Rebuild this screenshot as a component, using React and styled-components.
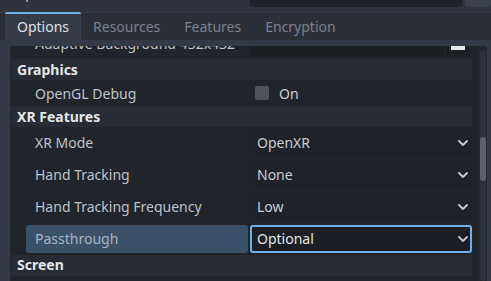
import React from "react";
import styled, { createGlobalStyle } from "styled-components";

const ACCENT = "#6fb0ec";

const GlobalStyle = createGlobalStyle`
	html, body {
		margin: 0;
		padding: 0;
		background: #2e333d;
		overflow: hidden;
	}
	body {
		font-family: "Noto Sans", "Open Sans", sans-serif;
		font-size: 14px;
	}
`;

const Window = styled.div`
	display: flex;
	flex-direction: column;
	width: 491px;
	height: 281px;
	box-sizing: border-box;
`;

const TopStrip = styled.div`
	height: 12px;
	overflow: hidden;
`;

const PathRow = styled.div`
	display: flex;
	align-items: flex-end;
	height: 30px;
	margin-top: -22px;
	padding: 0 0 1px 10px;
	box-sizing: border-box;
`;

const PathLabel = styled.span`
	align-self: center;
	width: 240px;
	color: #bfc3c8;
`;

const PathField = styled.div`
	width: 212px;
	height: 28px;
	background: #1f232a;
	border-radius: 3px;
`;

const BrowseButton = styled.div`
	width: 26px;
	height: 28px;
	margin-left: 3px;
	background: #3a404a;
	border-radius: 3px;
`;

const TabBar = styled.div`
	display: flex;
	height: 28px;
	padding-left: 5px;
	background: #2a2f38;
	border-top: 1px solid #353b45;
	box-sizing: border-box;
`;

const Tab = styled.div`
	display: flex;
	align-items: center;
	padding: 0 12px 1px;
	margin-top: -1px;
	border-top: 2px solid ${(p) => (p.$active ? ACCENT : "transparent")};
	background: ${(p) => (p.$active ? "#363c47" : "transparent")};
	color: ${(p) => (p.$active ? "#dfe2e6" : "#7b818a")};
	border-radius: 2px 2px 0 0;
`;

const Panel = styled.div`
	flex: 1;
	display: flex;
	min-height: 0;
	background: #343a45;
	padding: 6px 4px 0 10px;
`;

const Inspector = styled.div`
	flex: 1;
	overflow: hidden;
	background: #21252b;
	border-radius: 3px 0 0 0;
`;

const Content = styled.div`
	margin-top: -18px;
`;

const PropertyRow = styled.div`
	display: flex;
	align-items: center;
	gap: 2px;
	height: ${(p) => p.$h}px;
	padding: 0 6px 0 16px;
`;

const LabelCell = styled.div`
	display: flex;
	align-items: center;
	width: 222px;
	height: 28px;
	box-sizing: border-box;
	padding: 0 0 ${(p) => p.$lift || 0}px 9px;
	border-radius: 3px;
	background: ${(p) => (p.$selected ? "#3a5169" : "transparent")};
	color: ${(p) => (p.$selected ? "#a6b3c1" : "#bec2c7")};
	white-space: nowrap;
`;

const SectionHeader = styled.div`
	display: flex;
	align-items: center;
	height: 21px;
	margin-right: 6px;
	padding: 0 0 ${(p) => p.$lift || 0}px 7px;
	box-sizing: border-box;
	background: #272c34;
	color: #e4e6e9;
	font-weight: 700;
`;

const ValueCell = styled.div`
	display: flex;
	align-items: center;
	gap: ${(p) => p.$gap || 0}px;
	width: 222px;
	height: 28px;
	padding-left: ${(p) => p.$pad || 0}px;
	box-sizing: border-box;
	color: #c9ccd1;
`;

const TextureField = styled.div`
	width: 194px;
	height: 28px;
	background: #1c2025;
	border-radius: 3px;
`;

const TexturePreview = styled.div`
	display: flex;
	align-items: flex-end;
	justify-content: center;
	width: 24px;
	height: 28px;
	margin-left: 2px;
	padding-bottom: 8px;
	box-sizing: border-box;
	background: #1c2025;
`;

const TextureImage = styled.div`
	width: 14px;
	height: 14px;
	background: #e8e9ec;
`;

const Checkbox = styled.div`
	width: 14px;
	height: 14px;
	border-radius: 2px;
	background: #4d525b;
`;

const Dropdown = styled.div`
	display: flex;
	align-items: center;
	justify-content: space-between;
	width: 222px;
	height: 28px;
	box-sizing: border-box;
	padding: 0 2px 1px 5px;
	border: 2px solid ${(p) => (p.$focused ? ACCENT : "transparent")};
	border-radius: 3px;
	background: ${(p) => (p.$focused ? "#1b1e24" : "#1f2329")};
	color: ${(p) => (p.$focused ? "#e2e4e7" : "#c9ccd1")};
`;

const ScrollTrack = styled.div`
	width: 9px;
	padding: 4px 1px 0 2px;
	box-sizing: border-box;
	background: #23272e;
`;

const ScrollRail = styled.div`
	height: 100%;
	border-radius: 3px;
	background: #2d323b;
	padding-top: ${(p) => p.$offset}px;
	box-sizing: border-box;
`;

const ScrollThumb = styled.div`
	height: ${(p) => p.$size}px;
	border-radius: 3px;
	background: #5c626c;
`;

const Chevron = () => (
	<svg width="10" height="6" viewBox="0 0 10 6">
		<polyline
			points="1,1 5,5 9,1"
			fill="none"
			stroke="#c4c7cc"
			strokeWidth="1.8"
			strokeLinecap="round"
			strokeLinejoin="round"
		/>
	</svg>
);

const DropdownProperty = ({ label, value, selected }) => (
	<PropertyRow $h={32}>
		<LabelCell $selected={selected} $lift={2}>
			{label}
		</LabelCell>
		<Dropdown $focused={selected}>
			<span>{value}</span>
			<Chevron />
		</Dropdown>
	</PropertyRow>
);

const tabs = ["Options", "Resources", "Features", "Encryption"];

export default function App() {
	return (
		<Window>
			<GlobalStyle />
			<TopStrip>
				<PathRow>
					<PathLabel>Export Path:</PathLabel>
					<PathField />
					<BrowseButton />
				</PathRow>
			</TopStrip>
			<TabBar>
				{tabs.map((t, i) => (
					<Tab key={t} $active={i === 0}>
						{t}
					</Tab>
				))}
			</TabBar>
			<Panel>
				<Inspector>
					<Content>
						<PropertyRow $h={31}>
							<LabelCell>Adaptive Background 432x432</LabelCell>
							<ValueCell>
								<TextureField />
								<TexturePreview>
									<TextureImage />
								</TexturePreview>
							</ValueCell>
						</PropertyRow>
						<SectionHeader>Graphics</SectionHeader>
						<PropertyRow $h={26}>
							<LabelCell>OpenGL Debug</LabelCell>
							<ValueCell $pad={5} $gap={10}>
								<Checkbox />
								<span>On</span>
							</ValueCell>
						</PropertyRow>
						<SectionHeader>XR Features</SectionHeader>
						<DropdownProperty label="XR Mode" value="OpenXR" />
						<DropdownProperty label="Hand Tracking" value="None" />
						<DropdownProperty label="Hand Tracking Frequency" value="Low" />
						<DropdownProperty label="Passthrough" value="Optional" selected />
						<SectionHeader $lift={3}>Screen</SectionHeader>
					</Content>
				</Inspector>
				<ScrollTrack>
					<ScrollRail $offset={87}>
						<ScrollThumb $size={44} />
					</ScrollRail>
				</ScrollTrack>
			</Panel>
		</Window>
	);
}
